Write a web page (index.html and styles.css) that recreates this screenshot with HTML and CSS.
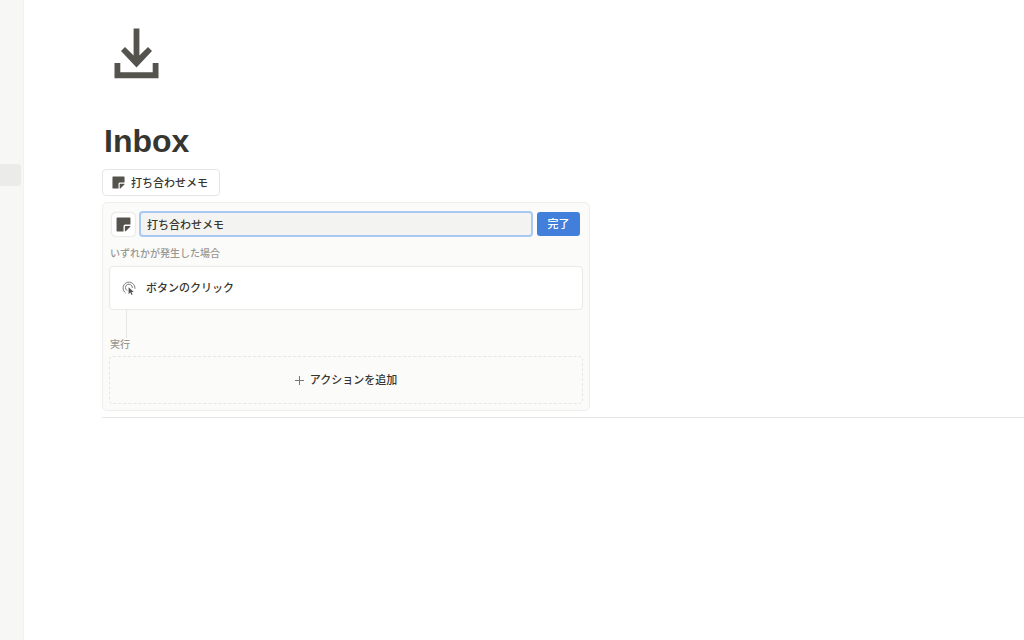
FILE: index.html
```html
<!DOCTYPE html>
<html lang="ja">
<head>
    <meta charset="UTF-8">
    <meta name="viewport" content="width=device-width, initial-scale=1.0">
    <title>Inbox</title>
    <link rel="stylesheet" href="styles.css">
</head>
<body>
    <nav class="sidebar" aria-label="サイドバー">
        <div class="sidebar-item"></div>
    </nav>
    <main class="page">
        <svg class="page-icon" viewBox="0 0 46 52" aria-hidden="true">
            <path d="M19.6 1.4h5.8v27l8.6-8.4 4 4-15.5 16.4L7 24l4-4 8.6 8.4zM.5 36h5.8v9.2h32.4V36h5.8v15.2H.5z"/>
        </svg>
        <h1>Inbox</h1>
        <button class="memo-button" type="button">
            <svg class="memo-icon" viewBox="0 0 14 14" aria-hidden="true">
                <path d="M1.2.5h11.6q.7 0 .7.7V7H8.6Q7 7 7 8.6v4.9H1.2q-.7 0-.7-.7V1.2q0-.7.7-.7zM8.8 8.3h4.7q0 .6-.4 1l-3.8 3.8q-.4.4-1 .4V8.8q0-.5.5-.5z"/>
            </svg>
            打ち合わせメモ
        </button>
        <section class="editor">
            <div class="editor-head">
                <button class="icon-button" type="button" aria-label="アイコンを変更">
                    <svg class="memo-icon" viewBox="0 0 14 14" aria-hidden="true">
                        <path d="M1.2.5h11.6q.7 0 .7.7V7H8.6Q7 7 7 8.6v4.9H1.2q-.7 0-.7-.7V1.2q0-.7.7-.7zM8.8 8.3h4.7q0 .6-.4 1l-3.8 3.8q-.4.4-1 .4V8.8q0-.5.5-.5z"/>
                    </svg>
                </button>
                <input class="name-input" type="text" value="打ち合わせメモ" aria-label="ボタン名">
                <button class="done-button" type="button">完了</button>
            </div>
            <div class="label">いずれかが発生した場合</div>
            <button class="trigger" type="button">
                <svg class="click-icon" viewBox="0 0 14 14" aria-hidden="true">
                    <path class="ring" d="M3.4 11.9A6 6 0 1 1 13 7.3M4.9 9.5A3.5 3.5 0 1 1 10.4 6.6"/>
                    <path class="cursor" d="M6.6 6.2l5.2 4.7-2.3.1 1.1 2.4-1.1.5-1.1-2.4-1.8 1.5z"/>
                </svg>
                ボタンのクリック
            </button>
            <div class="connector"></div>
            <div class="label">実行</div>
            <button class="add-action" type="button">
                <svg class="plus-icon" viewBox="0 0 9 9" aria-hidden="true">
                    <path d="M4.5 0v9M0 4.5h9"/>
                </svg>
                アクションを追加
            </button>
        </section>
        <hr>
    </main>
</body>
</html>
```
FILE: styles.css
```css
* {
    box-sizing: border-box;
}
body {
    margin: 0;
    display: flex;
    min-height: 100vh;
    background-color: #fff;
    color: #37352f;
    font-family: "Liberation Sans", "Noto Sans CJK JP", sans-serif;
    font-size: 11px;
    line-height: 16px;
}
button,
input {
    font: inherit;
    color: inherit;
    margin: 0;
}
button {
    cursor: pointer;
}
svg {
    display: block;
    flex: none;
}
.sidebar {
    flex: none;
    width: 24px;
    padding-top: 164px;
    background-color: #f7f7f5;
    border-right: 1px solid #f2f2f0;
}
.sidebar-item {
    height: 22px;
    margin-right: 2px;
    background-color: #ebebe9;
    border-radius: 0 3px 3px 0;
}
.page {
    flex: 1;
    min-width: 0;
    padding: 27px 0 0 78px;
}
.page-icon {
    width: 46px;
    height: 52px;
    margin-left: 12px;
    fill: #55534e;
}
h1 {
    margin: 42px 0 8px 2px;
    font-size: 32px;
    line-height: 40px;
    font-weight: 700;
}
.memo-button {
    display: flex;
    align-items: center;
    gap: 6px;
    height: 27px;
    padding: 0 11px 0 9px;
    background-color: #fff;
    border: 1px solid #e6e6e4;
    border-radius: 4px;
    font-weight: 500;
}
.memo-icon {
    width: 13px;
    height: 13px;
    fill: #55534e;
}
.editor {
    max-width: 488px;
    margin-top: 6px;
    padding: 8px 6px 6px;
    background-color: #fbfbf9;
    border: 1px solid #eeeeec;
    border-radius: 5px;
}
.editor-head {
    display: flex;
    align-items: center;
    gap: 4px;
    padding: 0 3px;
    margin-bottom: 10px;
}
.icon-button {
    display: flex;
    align-items: center;
    justify-content: center;
    width: 23px;
    height: 23px;
    padding: 0;
    background-color: #fff;
    border: none;
    border-radius: 4px;
    box-shadow: 0 0 2px rgba(15, 15, 15, 0.25);
}
.icon-button .memo-icon {
    width: 15px;
    height: 15px;
}
.name-input {
    flex: 1;
    min-width: 0;
    height: 26px;
    padding: 0 6px;
    background-color: #f3f3f1;
    border: 2px solid #a9c8f3;
    border-radius: 4px;
    outline: none;
    font-weight: 500;
}
.done-button {
    width: 43px;
    height: 24px;
    padding: 0;
    background-color: #417fdb;
    border: none;
    border-radius: 3px;
    color: #fff;
    font-weight: 500;
}
.label {
    padding-left: 1px;
    color: #989792;
    font-size: 10px;
    line-height: 14px;
    font-weight: 500;
}
.trigger {
    display: flex;
    align-items: center;
    gap: 10px;
    width: 100%;
    height: 44px;
    margin-top: 5px;
    padding: 0 12px;
    background-color: #fff;
    border: 1px solid #e9e9e7;
    border-radius: 4px;
    font-weight: 500;
}
.click-icon {
    width: 14px;
    height: 14px;
}
.ring {
    fill: none;
    stroke: #7a7975;
    stroke-linecap: round;
}
.cursor {
    fill: #55534e;
}
.connector {
    width: 1px;
    height: 28px;
    margin-left: 17px;
    background-color: #e6e6e4;
}
.add-action {
    display: flex;
    align-items: center;
    justify-content: center;
    gap: 6px;
    width: 100%;
    height: 48px;
    margin-top: 4px;
    padding: 0;
    background: none;
    border: 1px dashed #e6e6e4;
    border-radius: 4px;
    font-weight: 500;
}
.plus-icon {
    width: 9px;
    height: 9px;
    stroke: #7a7975;
}
hr {
    height: 1px;
    margin: 6px 0 0;
    background-color: #e6e6e4;
    border: none;
}
```
